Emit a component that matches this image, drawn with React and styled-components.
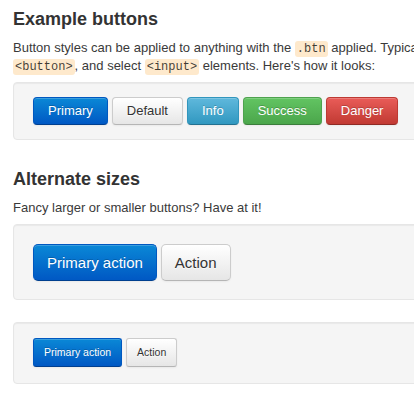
import React from 'react';
import styled, { createGlobalStyle, css } from 'styled-components';

const GlobalStyle = createGlobalStyle`
  html, body {
    margin: 0;
    padding: 0;
    background: #fff;
    overflow: hidden;
  }
  body {
    font-family: "Liberation Sans", Arial, sans-serif;
    font-size: 13px;
    line-height: 18px;
    color: #333;
  }
`;

const Page = styled.div`
  width: 620px;
  padding: 8px 0 0 13px;
`;

const Section = styled.section`
  margin-bottom: 28px;
`;

const Heading = styled.h2`
  margin: 0 0 9px;
  font-size: 18px;
  line-height: 22px;
  font-weight: bold;
  color: #333;
`;

const Lead = styled.p`
  margin: 0 0 7px;
  white-space: nowrap;
  color: #3a3a3a;
`;

const Code = styled.code`
  font-family: "Liberation Mono", "Courier New", monospace;
  font-size: 12px;
  line-height: 12px;
  padding: 1px 2px;
  background-color: #fee9cc;
  color: rgba(0, 0, 0, 0.75);
  border-radius: 3px;
`;

const Well = styled.div`
  display: flex;
  align-items: center;
  gap: 4px;
  padding: ${(p) => p.$pad || '14px 19px'};
  margin-bottom: ${(p) => p.$gap || 0}px;
  background-color: #f5f5f5;
  border: 1px solid #e6e6e6;
  border-radius: 4px;
  box-shadow: inset 0 1px 1px rgba(0, 0, 0, 0.05);
`;

const variants = {
  primary: css`
    color: #fff;
    background-image: linear-gradient(to bottom, #0a88d6, #0058c4);
    border-color: #0058c0 #0058c0 #003f8f;
  `,
  info: css`
    color: #fff;
    background-image: linear-gradient(to bottom, #5fb8dc, #3198c0);
    border-color: #3196bd #3196bd #237190;
  `,
  success: css`
    color: #fff;
    background-image: linear-gradient(to bottom, #62c462, #4ba64b);
    border-color: #4ea24e #4ea24e #3b7d3b;
  `,
  danger: css`
    color: #fff;
    background-image: linear-gradient(to bottom, #e95c58, #c13a33);
    border-color: #bd3a33 #bd3a33 #8f2a24;
  `,
  default: css`
    color: #333;
    text-shadow: 0 1px 1px rgba(255, 255, 255, 0.75);
    background-image: linear-gradient(to bottom, #ffffff, #e6e6e6);
    border-color: #ccc #ccc #b5b5b5;
  `,
};

const sizes = {
  large: css`
    padding: 9px 13px;
    font-size: 15px;
    line-height: 17px;
    border-radius: 5px;
  `,
  base: css`
    padding: 5px 14px 6px;
    font-size: 13px;
    line-height: 15px;
    border-radius: 4px;
  `,
  small: css`
    padding: 7px 10px;
    font-size: 10.5px;
    line-height: 13px;
    border-radius: 3px;
  `,
};

const Button = styled.button`
  display: inline-block;
  font-family: "Liberation Sans", Arial, sans-serif;
  border: 1px solid;
  cursor: pointer;
  white-space: nowrap;
  text-shadow: 0 -1px 0 rgba(0, 0, 0, 0.2);
  box-shadow: inset 0 1px 0 rgba(255, 255, 255, 0.2), 0 1px 2px rgba(0, 0, 0, 0.05);
  ${(p) => sizes[p.$size || 'base']};
  ${(p) => variants[p.$variant || 'default']};
`;

export default function App() {
  return (
    <>
      <GlobalStyle />
      <Page>
        <Section>
          <Heading>Example buttons</Heading>
          <Lead>
            Button styles can be applied to anything with the <Code>.btn</Code> applied. Typically
            you'll want to apply these to only <Code>&lt;a&gt;</Code> and
            <br />
            <Code>&lt;button&gt;</Code>, and select <Code>&lt;input&gt;</Code> elements. Here's how it
            looks:
          </Lead>
          <Well>
            <Button $variant="primary">Primary</Button>
            <Button>Default</Button>
            <Button $variant="info">Info</Button>
            <Button $variant="success">Success</Button>
            <Button $variant="danger">Danger</Button>
          </Well>
        </Section>
        <Section>
          <Heading>Alternate sizes</Heading>
          <Lead>Fancy larger or smaller buttons? Have at it!</Lead>
          <Well $pad="19px 19px 18px" $gap={22}>
            <Button $variant="primary" $size="large">Primary action</Button>
            <Button $size="large">Action</Button>
          </Well>
          <Well $pad="15px 19px 16px">
            <Button $variant="primary" $size="small">Primary action</Button>
            <Button $size="small">Action</Button>
          </Well>
        </Section>
      </Page>
    </>
  );
}
